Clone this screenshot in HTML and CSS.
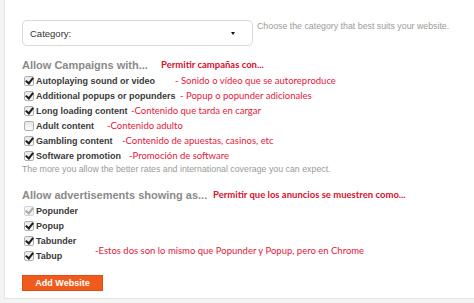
FILE: index.html
```html
<!DOCTYPE html>
<html lang="en">
<head>
    <meta charset="UTF-8">
    <title>Add Website</title>
    <link rel="stylesheet" href="styles.css">
</head>
<body>
    <div class="panel">
        <div class="category-row">
            <div class="select">
                <span>Category:</span>
                <span class="arrow"></span>
            </div>
            <p class="hint">Choose the category that best suits your website.</p>
        </div>

        <h3 class="group-title">Allow Campaigns with...
            <span class="note strong n-camp">Permitir campañas con...</span>
        </h3>
        <label class="opt"><input type="checkbox" class="cb" checked>Autoplaying sound or video
            <span class="note n1">- Sonido o vídeo que se autoreproduce</span></label>
        <label class="opt"><input type="checkbox" class="cb" checked>Additional popups or popunders
            <span class="note n2">- Popup o popunder adicionales</span></label>
        <label class="opt"><input type="checkbox" class="cb" checked>Long loading content
            <span class="note n3">-Contenido que tarda en cargar</span></label>
        <label class="opt"><input type="checkbox" class="cb">Adult content
            <span class="note n4">-Contenido adulto</span></label>
        <label class="opt"><input type="checkbox" class="cb" checked>Gambling content
            <span class="note n5">-Contenido de apuestas, casinos, etc</span></label>
        <label class="opt"><input type="checkbox" class="cb" checked>Software promotion
            <span class="note n6">-Promoción de software</span></label>
        <p class="help">The more you allow the better rates and international coverage you can expect.</p>

        <h3 class="group-title second">Allow advertisements showing as...
            <span class="note strong n-ads">Permitir que los anuncios se muestren como...</span>
        </h3>
        <label class="opt"><input type="checkbox" class="cb" checked disabled>Popunder</label>
        <label class="opt"><input type="checkbox" class="cb" checked>Popup</label>
        <label class="opt"><input type="checkbox" class="cb" checked>Tabunder</label>
        <label class="opt"><input type="checkbox" class="cb" checked>Tabup
            <span class="note n7">-Estos dos son lo mismo que Popunder y Popup, pero en Chrome</span></label>

        <button class="add-btn">Add Website</button>
    </div>
</body>
</html>
```

FILE: styles.css
```css
body {
    margin: 0;
    background-color: #f4f4f4;
    font-family: "Liberation Sans", Arial, sans-serif;
}
.panel {
    box-sizing: border-box;
    height: 299px;
    margin-left: 4px;
    padding: 20px 0 0 17px;
    background-color: #fff;
    border-left: 1px solid #e4e4e4;
    border-bottom: 1px solid #e4e4e4;
}
.category-row {
    display: flex;
    align-items: flex-start;
}
.select {
    box-sizing: border-box;
    width: 231px;
    height: 26px;
    display: flex;
    align-items: center;
    justify-content: space-between;
    padding: 0 17px 0 7px;
    border: 1px solid #d9d9d9;
    border-radius: 5px;
    font-size: 9.5px;
    color: #333;
}
.arrow {
    width: 0;
    height: 0;
    margin-top: 1px;
    border-left: 2px solid transparent;
    border-right: 2px solid transparent;
    border-top: 3px solid #111;
}
.hint {
    margin: 0 0 0 4px;
    line-height: 12px;
    font-size: 8.8px;
    color: #9a9a9a;
}
.group-title {
    position: relative;
    margin: 11px 0 0;
    line-height: 16px;
    font-size: 11px;
    font-weight: bold;
    color: #8a8a8a;
}
.group-title.second {
    margin-top: 12px;
}
.opt {
    position: relative;
    display: flex;
    align-items: center;
    height: 15px;
    font-size: 9px;
    font-weight: bold;
    color: #3a3a3a;
}
.cb {
    appearance: none;
    position: relative;
    box-sizing: border-box;
    width: 10px;
    height: 10px;
    margin: 0 2px 0 2px;
    border: 1px solid #b0b0b0;
    border-radius: 2px;
    background: linear-gradient(#e6e6e6, #fbfbfb);
}
.cb:checked::after {
    content: "";
    position: absolute;
    left: 2px;
    top: -1px;
    width: 3px;
    height: 6px;
    border: solid #1e1e1e;
    border-width: 0 2px 2px 0;
    transform: rotate(38deg);
}
.cb:disabled {
    border-color: #d4d4d4;
    background: #f3f3f3;
}
.cb:disabled::after {
    border-color: #a8a8a8;
}
.help {
    margin: 0;
    line-height: 12px;
    font-size: 8.8px;
    color: #9a9a9a;
}
.note {
    position: absolute;
    top: 0;
    white-space: nowrap;
    line-height: 15px;
    font-family: Lato, "Open Sans", sans-serif;
    font-size: 9.5px;
    font-weight: normal;
    color: #e3173c;
}
.note.strong {
    font-weight: bold;
    color: #d7102e;
}
.n-camp { left: 139px; }
.n1 { left: 153px; }
.n2 { left: 158px; }
.n3 { left: 109px; }
.n4 { left: 85px; }
.n5 { left: 100px; }
.n6 { left: 107px; }
.n-ads { left: 191px; }
.n7 { left: 73px; top: -5px; }
.add-btn {
    display: block;
    width: 81px;
    height: 16px;
    margin-top: 12px;
    padding: 0;
    border: 1px solid #e04e12;
    background-color: #f15a1d;
    color: #fff;
    font-family: "Liberation Sans", Arial, sans-serif;
    font-size: 9px;
    font-weight: bold;
    cursor: pointer;
}
```
